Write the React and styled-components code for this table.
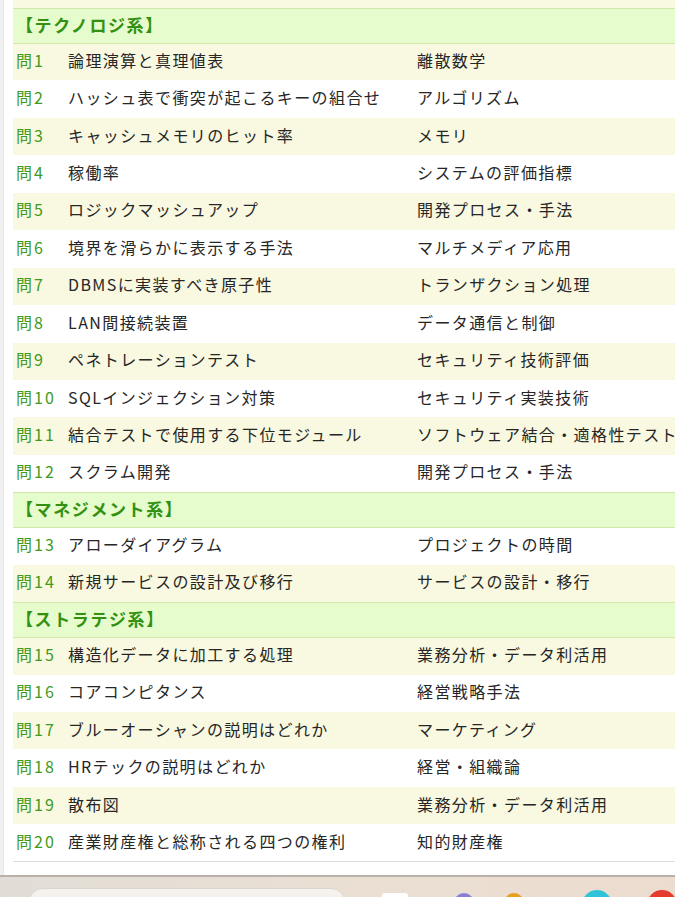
import styled, { createGlobalStyle } from "styled-components"

const GlobalStyle = createGlobalStyle`
  html, body {
    margin: 0;
    padding: 0;
    background: #ffffff;
    overflow: hidden;
  }
`;

const Page = styled.div`
  width: 675px;
  height: 897px;
  display: flex;
  flex-direction: column;
  overflow: hidden;
  font-family: "Noto Sans CJK JP", "Noto Sans", sans-serif;
`;

const Main = styled.div`
  flex: 1;
  display: flex;
  min-height: 0;
`;

const SideStrip = styled.div`
  width: 3px;
  background-color: #f0f0f0;
  border-right: 1px solid #e8e8e8;
`;

const Content = styled.div`
  flex: 1;
  padding-left: 9px;
  overflow: hidden;
`;

const Table = styled.table`
  width: 720px;
  border-collapse: collapse;
  table-layout: fixed;
  border-bottom: 1px solid #dcdcdc;
`;

const Row = styled.tr`
  height: 37.45px;
  background-color: ${(props) => (props.$shade ? "#f9f8e0" : "#ffffff")};
`;

const TailRow = styled.tr`
  height: 8px;
  background-color: #f9f8e0;
`;

const HeadRow = styled.tr`
  height: 35px;
  background-color: #e6fccc;
  border-top: 1px solid #cfe8ab;
  border-bottom: 1px solid #cfe8ab;
`;

const HeadCell = styled.td`
  padding: 0 0 3px 3px;
  font-size: 17px;
  font-weight: bold;
  color: #339112;
  letter-spacing: 1.6px;
`;

const NumCell = styled.td`
  padding: 0 0 4px 3px;
  font-size: 16px;
  color: #3f9a22;
  letter-spacing: 2px;
  white-space: nowrap;
`;

const TextCell = styled.td`
  padding: 0 0 4px 0;
  font-size: 16px;
  color: #262626;
  letter-spacing: 1.4px;
  white-space: nowrap;
`;

const FieldCell = styled(TextCell)``;

const BottomGap = styled.div`
  height: 12px;
`;

const Taskbar = styled.div`
  height: 20px;
  border-top: 2px solid #b9b1a9;
  background: linear-gradient(to right, #e1ddd6, #eadfd3 50%, #ecdccf);
  display: flex;
  align-items: flex-start;
  overflow: hidden;
`;

const SearchBox = styled.div`
  margin: 11px 0 0 28px;
  width: 316px;
  height: 30px;
  border-radius: 15px;
  background-color: #f5f2ee;
  border: 1px solid #ddd5cc;
  flex-shrink: 0;
`;

const TrayIcon = styled.div`
  margin: ${(props) => props.$top}px 0 0 ${(props) => props.$left}px;
  width: ${(props) => props.$size}px;
  height: ${(props) => props.$size}px;
  border-radius: ${(props) => (props.$square ? "3px" : "50%")};
  background-color: ${(props) => props.$color};
  flex-shrink: 0;
`;

const sections = [
  {
    title: "【テクノロジ系】",
    items: [
      ["問1", "論理演算と真理値表", "離散数学"],
      ["問2", "ハッシュ表で衝突が起こるキーの組合せ", "アルゴリズム"],
      ["問3", "キャッシュメモリのヒット率", "メモリ"],
      ["問4", "稼働率", "システムの評価指標"],
      ["問5", "ロジックマッシュアップ", "開発プロセス・手法"],
      ["問6", "境界を滑らかに表示する手法", "マルチメディア応用"],
      ["問7", "DBMSに実装すべき原子性", "トランザクション処理"],
      ["問8", "LAN間接続装置", "データ通信と制御"],
      ["問9", "ペネトレーションテスト", "セキュリティ技術評価"],
      ["問10", "SQLインジェクション対策", "セキュリティ実装技術"],
      ["問11", "結合テストで使用する下位モジュール", "ソフトウェア結合・適格性テスト"],
      ["問12", "スクラム開発", "開発プロセス・手法"],
    ],
  },
  {
    title: "【マネジメント系】",
    items: [
      ["問13", "アローダイアグラム", "プロジェクトの時間"],
      ["問14", "新規サービスの設計及び移行", "サービスの設計・移行"],
    ],
  },
  {
    title: "【ストラテジ系】",
    items: [
      ["問15", "構造化データに加工する処理", "業務分析・データ利活用"],
      ["問16", "コアコンピタンス", "経営戦略手法"],
      ["問17", "ブルーオーシャンの説明はどれか", "マーケティング"],
      ["問18", "HRテックの説明はどれか", "経営・組織論"],
      ["問19", "散布図", "業務分析・データ利活用"],
      ["問20", "産業財産権と総称される四つの権利", "知的財産権"],
    ],
  },
];

export default function App() {
  let index = 1;
  const rows = [];
  sections.forEach((section) => {
    rows.push(
      <HeadRow key={section.title}>
        <HeadCell colSpan={3}>{section.title}</HeadCell>
      </HeadRow>
    );
    index++;
    section.items.forEach(([num, text, field]) => {
      rows.push(
        <Row key={num} $shade={index % 2 === 0}>
          <NumCell>{num}</NumCell>
          <TextCell>{text}</TextCell>
          <FieldCell>{field}</FieldCell>
        </Row>
      );
      index++;
    });
  });

  return (
    <>
      <GlobalStyle />
      <Page>
        <Main>
          <SideStrip />
          <Content>
            <Table>
              <colgroup>
                <col style={{ width: 55 }} />
                <col style={{ width: 349 }} />
                <col />
              </colgroup>
              <tbody>
                <TailRow>
                  <td colSpan={3} />
                </TailRow>
                {rows}
              </tbody>
            </Table>
            <BottomGap />
          </Content>
        </Main>
        <Taskbar>
          <SearchBox />
          <TrayIcon $top={16} $left={36} $size={26} $color="#ffffff" $square />
          <TrayIcon $top={16} $left={46} $size={20} $color="#8a7fd6" />
          <TrayIcon $top={16} $left={30} $size={20} $color="#e8a020" />
          <TrayIcon $top={13} $left={58} $size={30} $color="#2fc3d8" />
          <TrayIcon $top={13} $left={35} $size={30} $color="#e53a2e" />
        </Taskbar>
      </Page>
    </>
  )
}
